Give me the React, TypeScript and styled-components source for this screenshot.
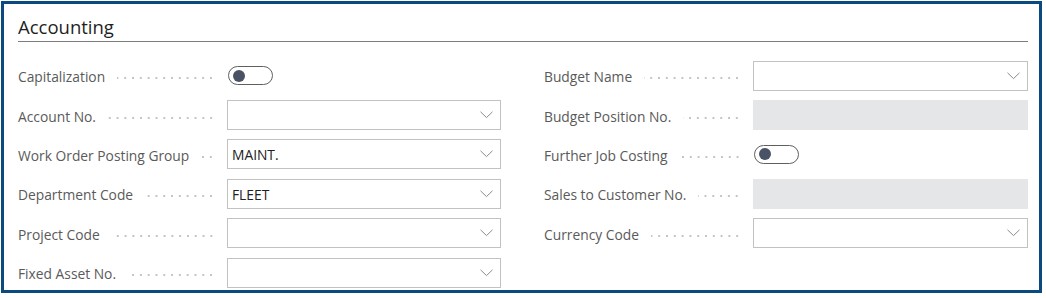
import React from 'react'
import styled, { createGlobalStyle } from 'styled-components'

const GlobalStyle = createGlobalStyle`
  html, body {
    margin: 0;
    padding: 0;
    background: #ffffff;
  }
  body {
    font-family: "Open Sans", "Noto Sans", sans-serif;
    -webkit-font-smoothing: antialiased;
  }
`

type Field =
  | { label: string; kind: 'toggle' }
  | { label: string; kind: 'lookup'; value?: string }
  | { label: string; kind: 'disabled' }

const leftFields: Field[] = [
  { label: 'Capitalization', kind: 'toggle' },
  { label: 'Account No.', kind: 'lookup' },
  { label: 'Work Order Posting Group', kind: 'lookup', value: 'MAINT.' },
  { label: 'Department Code', kind: 'lookup', value: 'FLEET' },
  { label: 'Project Code', kind: 'lookup' },
  { label: 'Fixed Asset No.', kind: 'lookup' },
]

const rightFields: Field[] = [
  { label: 'Budget Name', kind: 'lookup' },
  { label: 'Budget Position No.', kind: 'disabled' },
  { label: 'Further Job Costing', kind: 'toggle' },
  { label: 'Sales to Customer No.', kind: 'disabled' },
  { label: 'Currency Code', kind: 'lookup' },
]

const Chevron = () => (
  <svg width="13" height="8" viewBox="0 0 13 8" fill="none">
    <polyline points="0.5,0.8 6.5,6.6 12.5,0.8" stroke="#8a8a8a" strokeWidth="1" />
  </svg>
)

const FieldRow = ({ field }: { field: Field }) => (
  <Row>
    <Caption>
      <LabelText>{field.label}</LabelText>
      <Leader />
    </Caption>
    {field.kind === 'toggle' && (
      <Switch>
        <Knob />
      </Switch>
    )}
    {field.kind === 'lookup' && (
      <Lookup>
        <Value>{field.value}</Value>
        <Chevron />
      </Lookup>
    )}
    {field.kind === 'disabled' && <Disabled />}
  </Row>
)

export default function App() {
  return (
    <>
      <GlobalStyle />
      <Frame>
        <Header>
          <Title>Accounting</Title>
        </Header>
        <Columns>
          <Column>
            {leftFields.map((f) => (
              <FieldRow key={f.label} field={f} />
            ))}
          </Column>
          <Column>
            {rightFields.map((f) => (
              <FieldRow key={f.label} field={f} />
            ))}
          </Column>
        </Columns>
      </Frame>
    </>
  )
}

const Frame = styled.div`
  box-sizing: border-box;
  margin: 1px 0 0 1px;
  width: 1041px;
  height: 292px;
  border: 3px solid #0b4a7e;
  padding: 0 11px 0 14px;
  background: #fff;
  overflow: hidden;
`

const Header = styled.div`
  height: 38px;
  box-sizing: border-box;
  border-bottom: 1px solid #7d7d7d;
  display: flex;
  align-items: flex-end;
  padding-bottom: 3px;
`

const Title = styled.h2`
  margin: 0;
  font-size: 18.5px;
  font-weight: 400;
  color: #1f1f1f;
  line-height: 22px;
`

const Columns = styled.div`
  display: grid;
  grid-template-columns: 483px 484px;
  column-gap: 43px;
  padding-top: 14px;
`

const Column = styled.div`
  display: flex;
  flex-direction: column;
`

const Row = styled.div`
  display: grid;
  grid-template-columns: 209px 1fr;
  align-items: center;
  height: 39.4px;
`

const Caption = styled.div`
  display: flex;
  align-items: center;
  min-width: 0;
  padding-right: 12px;
  margin-top: 2px;
`

const LabelText = styled.span`
  font-size: 13.8px;
  color: #5a5a5a;
  white-space: nowrap;
  padding-right: 12px;
`

const Leader = styled.span`
  flex: 1;
  height: 2px;
  margin-top: 3px;
  background-image: radial-gradient(circle, #c4c4c4 0.7px, transparent 1px);
  background-size: 7.8px 2px;
  background-repeat: repeat-x;
  background-position: right center;
`

const Switch = styled.div`
  box-sizing: border-box;
  width: 45px;
  height: 19px;
  margin-left: 1px;
  border: 1px solid #5f5f5f;
  border-radius: 10px;
  display: flex;
  align-items: center;
  padding-left: 4px;
`

const Knob = styled.span`
  width: 12px;
  height: 12px;
  border-radius: 50%;
  background: #4a5366;
`

const Lookup = styled.div`
  box-sizing: border-box;
  height: 30px;
  border: 1px solid #c2c2c2;
  display: flex;
  align-items: center;
  justify-content: space-between;
  padding: 0 7px 0 4px;
  background: #fff;
`

const Value = styled.span`
  font-size: 13.8px;
  color: #212121;
  margin-top: 1px;
`

const Disabled = styled.div`
  height: 30px;
  background: #e5e6e8;
`
